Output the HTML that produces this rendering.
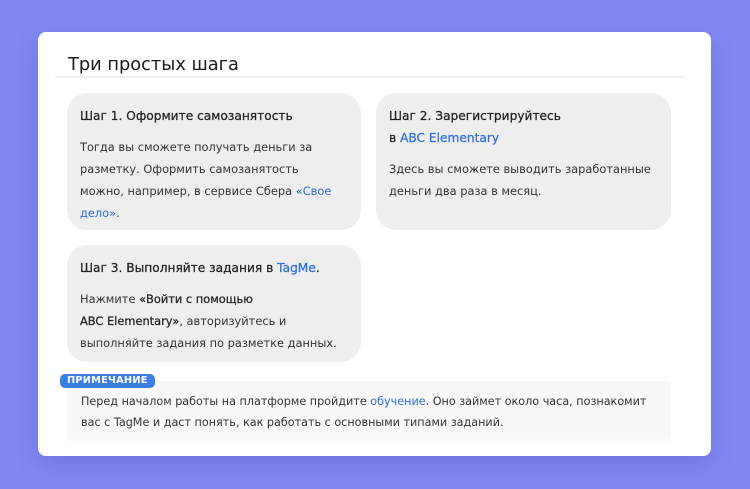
<!DOCTYPE html>
<html><head><style>
body{margin:0;width:750px;height:489px;background:#8189f5;font-family:"DejaVu Sans","Liberation Sans",sans-serif;position:relative;overflow:hidden}
.card{position:absolute;left:38px;top:32px;width:673px;height:424px;background:#fff;border-radius:8px;box-shadow:0 8px 24px rgba(60,60,140,.25);overflow:hidden}
h1{position:absolute;left:30px;top:22px;margin:0;font-weight:normal;font-size:17.8px;color:#1a1a1a;font-family:"DejaVu Sans",sans-serif}
.line{position:absolute;left:17px;top:44px;width:630px;height:2px;background:#f0f0f0}
.box{position:absolute;background:#eee;border-radius:20px;color:#333;font-size:11.4px;line-height:22px;padding:0 22px 0 13px;box-sizing:border-box}
.box b{font-weight:normal;display:block;font-size:12.2px;color:#222;-webkit-text-stroke:.25px #222}
.box b a{-webkit-text-stroke:.25px #2f6fd6}
a{color:#2f6fd6;text-decoration:none}
p{margin:0}
.label{position:absolute;left:22px;top:342px;background:#3b7fe3;color:#fff;font-size:9.8px;font-weight:bold;padding:0 7px;height:14px;line-height:14px;border-radius:5px;letter-spacing:.2px}
.note{position:absolute;left:29px;top:349px;width:604px;height:60px;background:#f8f8f8;font-size:11.2px;line-height:21px;color:#333;padding:10px 14px;box-sizing:border-box}
.fade{position:absolute;left:0;bottom:0;width:100%;height:22px;background:linear-gradient(rgba(255,255,255,0),#fff)}
.s{color:#222;-webkit-text-stroke:.25px #222}
</style></head><body>
<div class="card">
<h1>Три простых шага</h1>
<div class="line"></div>
<div class="box" style="left:29px;top:61px;width:294px;height:137px;padding-top:12px">
<b>Шаг 1. Оформите самозанятость</b>
<p style="margin-top:9px">Тогда вы сможете получать деньги за разметку. Оформить самозанятость можно, например, в сервисе Сбера <a>«Свое дело»</a>.</p>
</div>
<div class="box" style="left:338px;top:61px;width:295px;height:137px;padding:12px 8px 0 13px">
<b>Шаг 2. Зарегистрируйтесь<br>в <a>ABC Elementary</a></b>
<p style="margin-top:9px">Здесь вы сможете выводить заработанные деньги два раза в месяц.</p>
</div>
<div class="box" style="left:29px;top:213px;width:294px;height:117px;padding-top:12px">
<b>Шаг 3. Выполняйте задания в <a>TagMe</a>.</b>
<p style="margin-top:9px">Нажмите <span class="s">«Войти с помощью<br>ABC Elementary»</span>, авторизуйтесь и выполняйте задания по разметке данных.</p>
</div>
<div class="note">Перед началом работы на платформе пройдите <a>обучение</a>. Оно займет около часа, познакомит вас с TagMe и даст понять, как работать с основными типами заданий.</div>
<div class="label">ПРИМЕЧАНИЕ</div>
<div class="fade"></div>
</div>
</body></html>
